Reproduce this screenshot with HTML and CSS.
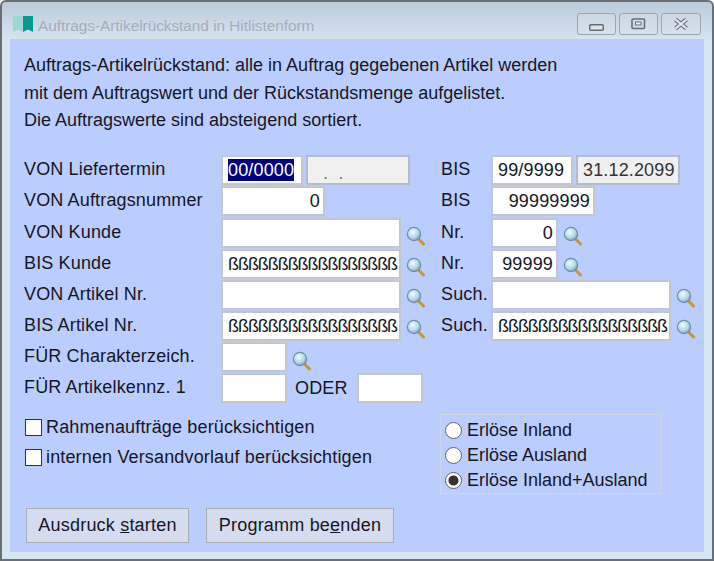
FILE: index.html
```html
<!DOCTYPE html>
<html lang="de">
<head>
  <meta charset="UTF-8">
  <title>Auftrags-Artikelrückstand in Hitlistenform</title>
  <link rel="stylesheet" href="styles.css">
</head>
<body>
  <svg class="defs" width="0" height="0">
    <defs>
      <radialGradient id="glass" cx="40%" cy="35%" r="70%">
        <stop offset="0" stop-color="#f2fafd"/>
        <stop offset="0.6" stop-color="#b5d8e6"/>
        <stop offset="1" stop-color="#6f9cb4"/>
      </radialGradient>
      <symbol id="lens" viewBox="0 0 20 20">
        <path d="M11.5 12 L17.5 18" stroke="#c9962f" stroke-width="3" stroke-linecap="round"/>
        <circle cx="8" cy="8" r="6.6" fill="url(#glass)" stroke="#6d8ea3" stroke-width="1.2"/>
      </symbol>
    </defs>
  </svg>

  <div class="window">
    <div class="titlebar">
      <svg class="app-icon" width="21" height="17" viewBox="0 0 21 17">
        <path d="M0 0H9.5V16L4.7 13.5L0 16Z" fill="#9bd8cf"/>
        <path d="M10 0H20V16L15 13.5L10 16Z" fill="#059a8f"/>
      </svg>
      <span class="title">Auftrags-Artikelrückstand in Hitlistenform</span>
      <div class="win-buttons">
        <div class="win-btn">
          <svg class="icon-min" width="15" height="8" viewBox="0 0 15 8"><rect x="0.75" y="0.75" width="13.5" height="5.5" rx="1" fill="#dfe4e8" stroke="#626d78" stroke-width="1.5"/></svg>
        </div>
        <div class="win-btn">
          <svg width="15" height="12" viewBox="0 0 15 12"><rect x="1" y="1" width="12.5" height="9.5" rx="1" fill="#d5dce3" stroke="#626d78" stroke-width="1.6"/><rect x="4.5" y="4" width="5.5" height="3" fill="#eef2f5" stroke="#626d78"/></svg>
        </div>
        <div class="win-btn win-close">
          <svg width="16" height="12" viewBox="0 0 16 12"><path d="M2.5 1.5L13.5 10.5M13.5 1.5L2.5 10.5" stroke="#6c7681" stroke-width="4.4"/><path d="M2.5 1.5L13.5 10.5M13.5 1.5L2.5 10.5" stroke="#e6ebef" stroke-width="2.2"/></svg>
        </div>
      </div>
    </div>

    <div class="content">
      <p class="intro">Auftrags-Artikelrückstand: alle in Auftrag gegebenen Artikel werden<br>
      mit dem Auftragswert und der Rückstandsmenge aufgelistet.<br>
      Die Auftragswerte sind absteigend sortiert.</p>

      <div class="form-grid">
        <div class="label">VON Liefertermin</div>
        <div class="cell">
          <div class="field w82"><span class="selected">00/0000</span></div>
          <div class="field readonly w104 dots">. &nbsp;.</div>
        </div>
        <div class="label">BIS</div>
        <div class="cell">
          <div class="field w82">99/9999</div>
          <div class="field readonly w104">31.12.2099</div>
        </div>

        <div class="label">VON Auftragsnummer</div>
        <div class="cell"><div class="field w104 right">0</div></div>
        <div class="label">BIS</div>
        <div class="cell"><div class="field w104 right">99999999</div></div>

        <div class="label">VON Kunde</div>
        <div class="cell">
          <div class="field w180"></div>
          <svg class="lens"><use href="#lens"/></svg>
        </div>
        <div class="label">Nr.</div>
        <div class="cell">
          <div class="field w67 right">0</div>
          <svg class="lens"><use href="#lens"/></svg>
        </div>

        <div class="label">BIS Kunde</div>
        <div class="cell">
          <div class="field w180 fill">ßßßßßßßßßßßßßßßßß</div>
          <svg class="lens"><use href="#lens"/></svg>
        </div>
        <div class="label">Nr.</div>
        <div class="cell">
          <div class="field w67 right">99999</div>
          <svg class="lens"><use href="#lens"/></svg>
        </div>

        <div class="label">VON Artikel Nr.</div>
        <div class="cell">
          <div class="field w180"></div>
          <svg class="lens"><use href="#lens"/></svg>
        </div>
        <div class="label">Such.</div>
        <div class="cell">
          <div class="field w180"></div>
          <svg class="lens"><use href="#lens"/></svg>
        </div>

        <div class="label">BIS Artikel Nr.</div>
        <div class="cell">
          <div class="field w180 fill">ßßßßßßßßßßßßßßßßß</div>
          <svg class="lens"><use href="#lens"/></svg>
        </div>
        <div class="label">Such.</div>
        <div class="cell">
          <div class="field w180 fill">ßßßßßßßßßßßßßßßßß</div>
          <svg class="lens"><use href="#lens"/></svg>
        </div>

        <div class="label">FÜR Charakterzeich.</div>
        <div class="cell wide">
          <div class="field w66"></div>
          <svg class="lens"><use href="#lens"/></svg>
        </div>

        <div class="label">FÜR Artikelkennz. 1</div>
        <div class="cell wide">
          <div class="field w66"></div>
          <span class="oder">ODER</span>
          <div class="field w66"></div>
        </div>
      </div>

      <div class="options">
        <div class="checks">
          <div class="check"><span class="box"></span>Rahmenaufträge berücksichtigen</div>
          <div class="check"><span class="box"></span>internen Versandvorlauf berücksichtigen</div>
        </div>
        <div class="radio-group">
          <div class="radio"><span class="dot"></span>Erlöse Inland</div>
          <div class="radio"><span class="dot"></span>Erlöse Ausland</div>
          <div class="radio"><span class="dot on"></span>Erlöse Inland+Ausland</div>
        </div>
      </div>

      <div class="actions">
        <div class="btn btn-start">Ausdruck <u>s</u>tarten</div>
        <div class="btn btn-end">Programm be<u>e</u>nden</div>
      </div>
    </div>
  </div>
</body>
</html>
```

FILE: styles.css
```css
* {
  box-sizing: border-box;
}
html,
body {
  margin: 0;
  background: #fff;
}
.defs {
  display: block;
  height: 0;
}
.window {
  width: 714px;
  height: 561px;
  display: flex;
  flex-direction: column;
  padding: 0 8px 7px 8px;
  background: linear-gradient(to bottom, #bccbd9 0, #d8e5f3 40px, #d8e5f3 100%);
  border: 2px solid #6b6f73;
  border-radius: 6px 6px 0 0;
  font-family: "Liberation Sans", Arial, sans-serif;
  font-size: 18px;
  color: #16161e;
}
.titlebar {
  height: 37px;
  flex: none;
  display: flex;
  align-items: center;
}
.app-icon {
  margin: 8px 0 0 3px;
}
.title {
  margin: 10px 0 0 4px;
  font-size: 15.3px;
  color: #a3aeb9;
}
.win-buttons {
  margin-left: auto;
  margin-right: 3px;
  display: flex;
  gap: 3px;
  align-self: flex-start;
  margin-top: 11px;
}
.win-btn {
  width: 39px;
  height: 22px;
  border: 1px solid #97a6b5;
  border-radius: 3px;
  background: linear-gradient(to bottom, #cbd7e2, #d6e1ec);
  display: flex;
  align-items: center;
  justify-content: center;
}
.win-close {
  width: 40px;
}
.icon-min {
  margin-top: 8px;
}
.content {
  flex: 1;
  background: #bbcdff;
  padding: 13px 0 0 14px;
}
.intro {
  margin: 0 0 20.8px;
  line-height: 27.5px;
}
.form-grid {
  display: grid;
  grid-template-columns: 197px 220px 50px 1fr;
  grid-auto-rows: 30px;
  row-gap: 1.14px;
  letter-spacing: 0.15px;
}
.label {
  line-height: 28px;
}
.cell {
  display: flex;
  align-items: center;
}
.wide {
  grid-column: span 3;
}
.field {
  height: 30px;
  background: #fff;
  border: 2px solid #c2c6ce;
  line-height: 26px;
  padding: 0 3px 0 5px;
  white-space: nowrap;
  overflow: hidden;
}
.fill {
  letter-spacing: -1.05px;
}
.w66 { width: 66px; }
.w67 { width: 67px; }
.w82 { width: 82px; }
.w104 { width: 104px; }
.w180 { width: 180px; }
.right {
  text-align: right;
}
.readonly {
  margin-left: 3px;
  background: #f0f0f0;
  border-color: #b3bccf;
  color: #333;
}
.dots {
  padding-left: 15px;
  line-height: 32px;
  color: #777;
}
.selected {
  background: #000080;
  color: #fff;
  display: inline-block;
  line-height: 22px;
}
.lens {
  width: 20px;
  height: 20px;
  margin: 7px 0 0 5px;
  flex: none;
}
.oder {
  margin: 0 0 0 8px;
  width: 62px;
}
.options {
  display: flex;
  justify-content: space-between;
  margin-top: 11px;
  height: 80px;
  padding-right: 43px;
  letter-spacing: 0.15px;
}
.checks {
  margin-top: -2px;
}
.check {
  display: flex;
  align-items: center;
  height: 30px;
  padding-left: 1px;
}
.box {
  width: 17px;
  height: 17px;
  margin-right: 4px;
  background: #fff;
  border: 1px solid #333;
  flex: none;
}
.radio-group {
  width: 221px;
  height: 80px;
  border: 1px solid #cfd6ea;
  padding: 3px 0 0 4px;
  letter-spacing: 0;
}
.radio {
  display: flex;
  align-items: center;
  height: 25px;
}
.dot {
  width: 17px;
  height: 17px;
  border-radius: 50%;
  border: 1.5px solid #636363;
  background: #fff;
  margin-right: 5px;
  flex: none;
}
.dot.on {
  background: radial-gradient(circle, #333 0, #333 4.5px, #fff 5.5px);
}
.actions {
  display: flex;
  margin: 14px 0 0 2px;
  gap: 17px;
  letter-spacing: 0.2px;
}
.btn {
  height: 35px;
  line-height: 33px;
  text-align: center;
  background: #d5dcef;
  border: 1px solid #a9adb5;
  color: #16161e;
}
.btn-start { width: 163px; }
.btn-end { width: 188px; }
```
